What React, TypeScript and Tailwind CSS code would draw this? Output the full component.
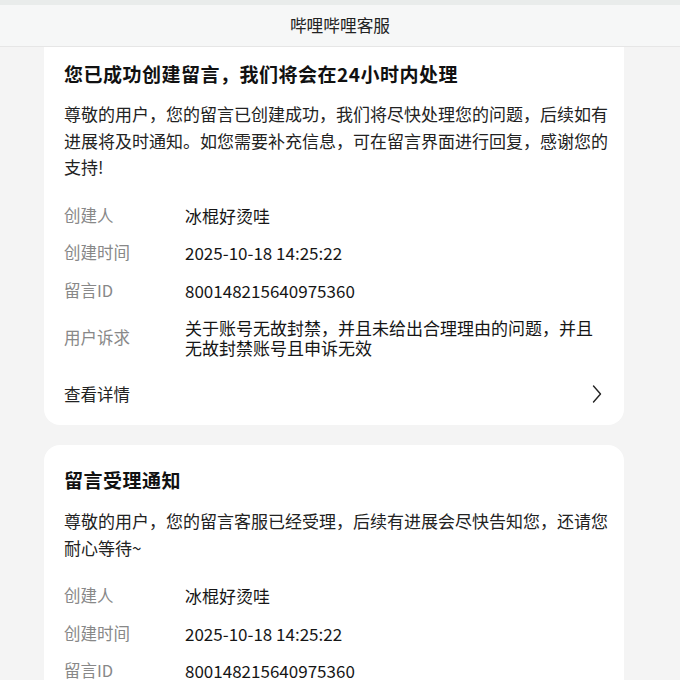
import React from "react";

type Row = { label: string; value: string };

function InfoRows({ rows }: { rows: Row[] }) {
  return (
    <div className="mt-[16px] flex flex-col">
      {rows.map((row) => (
        <div key={row.label} className="flex items-center py-[9px]">
          <div className="w-[121px] shrink-0 text-[16.5px] leading-[19.5px] text-[#888]">
            {row.label}
          </div>
          <div className="max-w-[415px] text-[17px] leading-[19.5px] text-[#161616]">
            {row.value}
          </div>
        </div>
      ))}
    </div>
  );
}

function App() {
  const rows: Row[] = [
    { label: "创建人", value: "冰棍好烫哇" },
    { label: "创建时间", value: "2025-10-18 14:25:22" },
    { label: "留言ID", value: "800148215640975360" },
  ];

  return (
    <div
      className="h-[680px] w-[680px] overflow-hidden bg-[#f4f4f4]"
      style={{ fontFamily: '"Noto Sans CJK SC", "Noto Sans", sans-serif' }}
    >
      {/* Header */}
      <div className="h-[5px] bg-[#e9eceb]"></div>
      <div className="flex h-[42px] items-center justify-center border-b border-[#e6e6e6] bg-[#f6f7f7] text-[16.7px] text-[#222]">
        哔哩哔哩客服
      </div>

      <div className="flex flex-col gap-[20px] pl-[44px] pr-[56px]">
        {/* Card 1 */}
        <div className="rounded-b-2xl bg-white pl-[20px] pr-[10px] pt-[14px]">
          <h2 className="text-[19px] font-bold leading-[26px] tracking-[0.5px] text-[#111]">
            您已成功创建留言，我们将会在24小时内处理
          </h2>
          <p className="mt-[14px] text-[17px] leading-[26.5px] text-[#222]">
            尊敬的用户，您的留言已创建成功，我们将尽快处理您的问题，后续如有进展将及时通知。如您需要补充信息，可在留言界面进行回复，感谢您的支持!
          </p>
          <InfoRows
            rows={[
              ...rows,
              {
                label: "用户诉求",
                value:
                  "关于账号无故封禁，并且未给出合理理由的问题，并且无故封禁账号且申诉无效",
              },
            ]}
          />
          <div className="flex h-[56px] items-center justify-between pr-[12px]">
            <span className="text-[16.5px] text-[#222]">查看详情</span>
            <svg width="10" height="18" viewBox="0 0 10 18" fill="none">
              <polyline
                points="1.5,1 8.5,9 1.5,17"
                stroke="#222"
                strokeWidth="1.4"
                strokeLinecap="round"
                strokeLinejoin="round"
              />
            </svg>
          </div>
          <div className="h-[3px]"></div>
        </div>

        {/* Card 2 */}
        <div className="rounded-2xl bg-white pb-[20px] pl-[20px] pr-[10px] pt-[22px]">
          <h2 className="text-[19px] font-bold leading-[26px] tracking-[0.5px] text-[#111]">
            留言受理通知
          </h2>
          <p className="mt-[15px] text-[17px] leading-[26.5px] text-[#222]">
            尊敬的用户，您的留言客服已经受理，后续有进展会尽快告知您，还请您耐心等待~
          </p>
          <InfoRows
            rows={[
              ...rows,
              { label: "用户诉求", value: "关于账号无故封禁，并且未给出合理理由的问题" },
            ]}
          />
        </div>
      </div>
    </div>
  );
}

export default App;
